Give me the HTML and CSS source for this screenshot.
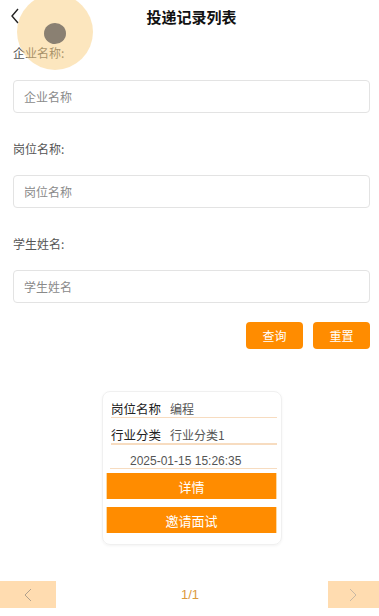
FILE: index.html
```html
<!DOCTYPE html>
<html lang="zh">
<head>
<meta charset="utf-8">
<link rel="stylesheet" href="styles.css">
</head>
<body>
<div class="page">
  <header class="topbar">
    <svg class="back" width="10" height="16" viewBox="0 0 10 16"><polyline points="8,1 2,8 8,15" fill="none" stroke="#222" stroke-width="1.4"/></svg>
    <h1 class="title">投递记录列表</h1>
    <div class="tap"><div class="tap-dot"></div></div>
  </header>

  <form class="form">
    <label class="label l1">企业名称:</label>
    <div class="input"><span class="ph">企业名称</span></div>
    <label class="label">岗位名称:</label>
    <div class="input"><span class="ph">岗位名称</span></div>
    <label class="label">学生姓名:</label>
    <div class="input"><span class="ph">学生姓名</span></div>
    <div class="actions">
      <button type="button" class="btn">查询</button>
      <button type="button" class="btn">重置</button>
    </div>
  </form>

  <section class="list">
    <div class="card">
      <div class="row r1"><span class="k">岗位名称</span><span class="v">编程</span></div>
      <div class="row r2"><span class="k">行业分类</span><span class="v">行业分类1</span></div>
      <div class="row date">2025-01-15 15:26:35</div>
      <button type="button" class="cbtn">详情</button>
      <button type="button" class="cbtn">邀请面试</button>
    </div>
  </section>

  <nav class="pager">
    <div class="pbox"><svg width="8" height="14" viewBox="0 0 8 14"><polyline points="7,1 1,7 7,13" fill="none" stroke="#b0a08c" stroke-width="1"/></svg></div>
    <div class="pnum">1/1</div>
    <div class="pbox right"><svg width="8" height="14" viewBox="0 0 8 14"><polyline points="1,1 7,7 1,13" fill="none" stroke="#c8b8a4" stroke-width="1"/></svg></div>
  </nav>
</div>
</body>
</html>
```

FILE: styles.css
```css
* { box-sizing: border-box; }
html, body { margin: 0; padding: 0; background: #fff; }
body {
  font-family: "Noto Sans CJK SC", "Liberation Sans", sans-serif;
  color: #333;
  width: 379px;
  height: 616px;
  overflow: hidden;
}
.page { position: relative; }
.topbar {
  position: relative;
  height: 34px;
  display: flex;
  align-items: center;
  justify-content: center;
}
.back { position: absolute; left: 10px; top: 8px; }
.title {
  margin: 0 0 0 4px;
  font-size: 15px;
  font-weight: 700;
  color: #111;
  line-height: 20px;
}
.tap {
  position: absolute;
  left: 17px;
  top: -6px;
  width: 76px;
  height: 76px;
  border-radius: 50%;
  background: rgba(250, 205, 125, 0.5);
  display: flex;
  align-items: center;
  justify-content: center;
  z-index: 5;
}
.tap-dot {
  width: 22px;
  height: 21px;
  border-radius: 50%;
  background: #8a8072;
  margin-top: 2px;
  filter: blur(0.6px);
}
.form {
  padding: 0 9px 0 13px;
  display: flex;
  flex-direction: column;
  margin: 0;
}
.label {
  font-size: 12px;
  line-height: 18px;
  color: #555;
  margin-top: 27px;
  margin-bottom: 17px;
}
.label.l1 { margin-top: 10px; margin-bottom: 18px; }
.input {
  height: 33px;
  border: 1px solid #e3e3e3;
  border-radius: 4px;
  display: flex;
  align-items: center;
  padding-left: 10px;
}
.ph { font-size: 12px; color: #8a8a8a; }
.actions {
  display: flex;
  justify-content: flex-end;
  gap: 10px;
  margin-top: 19px;
}
.btn {
  width: 57px;
  height: 27px;
  border: none;
  border-radius: 4px;
  background: #ff8c00;
  color: #fff;
  font-family: inherit;
  font-size: 12px;
  padding: 0;
}
.list {
  display: flex;
  justify-content: center;
  padding-left: 5px;
  margin-top: 42px;
}
.card {
  width: 180px;
  border: 1px solid #f0f0f0;
  border-radius: 8px;
  box-shadow: 0 1px 3px rgba(0,0,0,0.05);
  padding: 0 4px 11px 3px;
  display: flex;
  flex-direction: column;
}
.row {
  margin-left: 5px;
  border-bottom: 1px solid #f7dcc0;
  font-size: 12px;
  line-height: 14px;
  padding-top: 10px;
  padding-bottom: 1px;
  display: flex;
  gap: 9px;
}
.r1 { padding-top: 10px; }
.r2 { border-bottom-width: 2px; }
.k { color: #222; font-size: 12.5px; }
.v { color: #555; }
.row.date {
  margin-left: 4px;
  padding-left: 20px;
  padding-top: 9px;
  padding-bottom: 0;
  color: #555;
  font-family: "Liberation Sans", "Noto Sans CJK SC", sans-serif;
  font-size: 12px;
}
.cbtn {
  height: 26px;
  margin-top: 4px;
  border: 1px solid #fcd9a4;
  border-top: none;
  border-bottom: none;
  background: #ff8c00;
  color: #fff;
  font-family: inherit;
  font-size: 13px;
  padding: 0;
}
.cbtn + .cbtn { margin-top: 8px; }
.pager {
  display: flex;
  align-items: center;
  justify-content: space-between;
  margin-top: 36px;
  height: 27px;
}
.pbox {
  width: 56px;
  height: 27px;
  background: #ffdcb0;
  display: flex;
  align-items: center;
  justify-content: center;
}
.pbox.right { width: 51px; }
.pnum {
  font-size: 13px;
  color: #dc9a3c;
  font-family: "Liberation Sans", sans-serif;
  margin-right: 4px;
}
```
